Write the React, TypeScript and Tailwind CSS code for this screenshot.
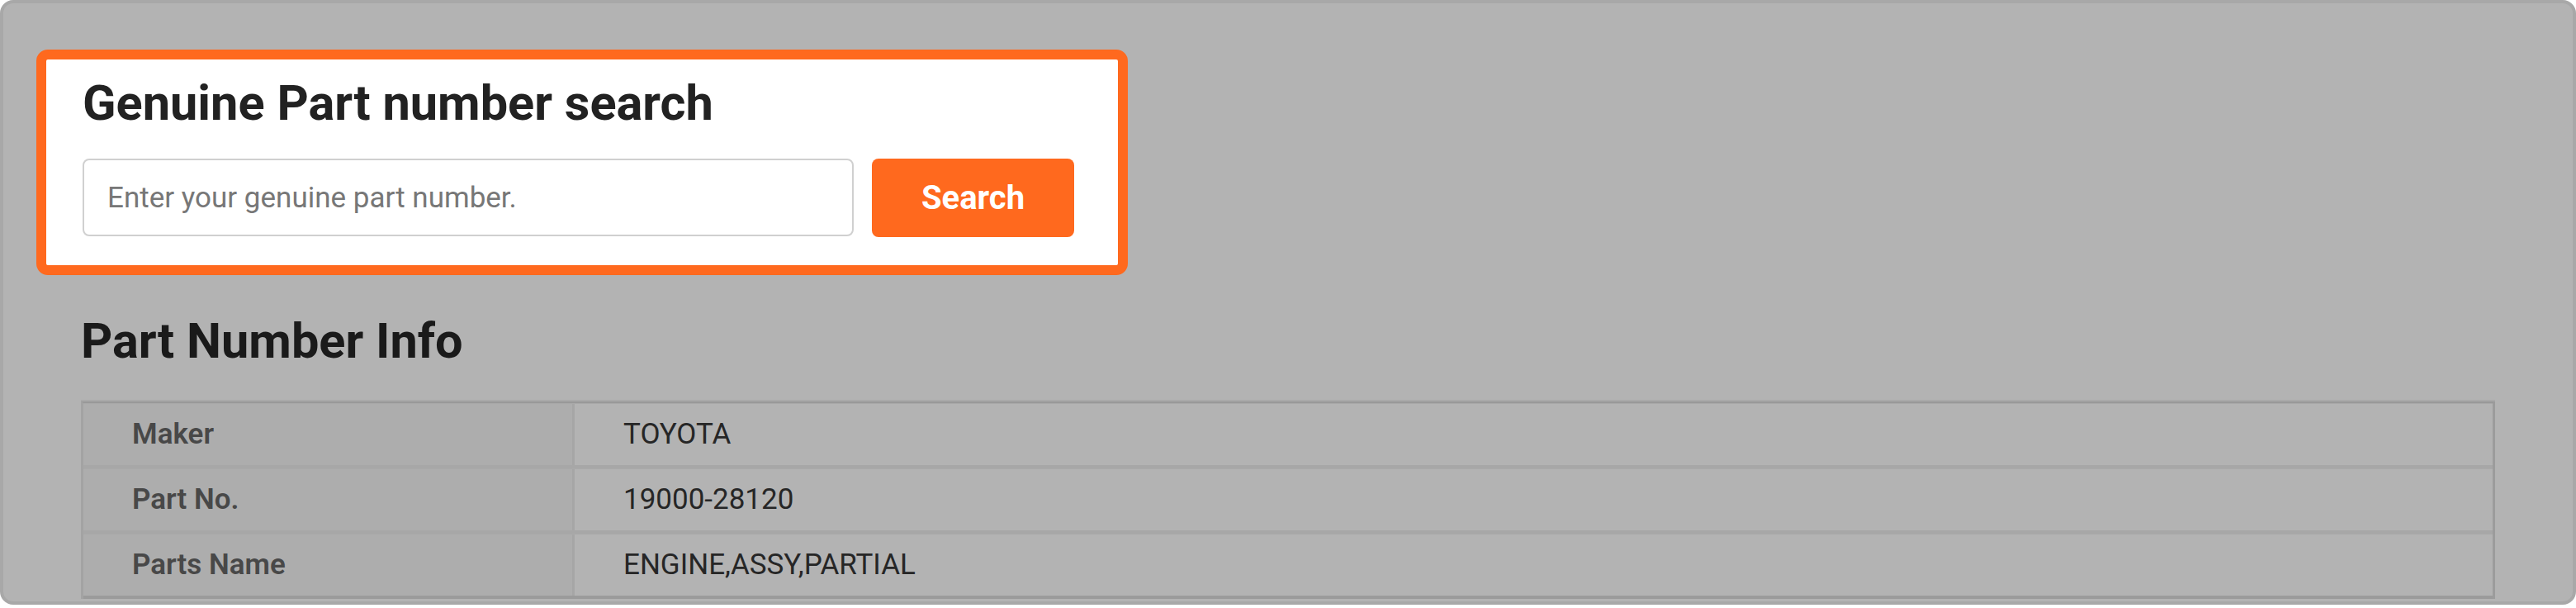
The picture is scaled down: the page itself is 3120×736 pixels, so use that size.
const rows = [
  { label: "Maker", value: "TOYOTA" },
  { label: "Part No.", value: "19000-28120" },
  { label: "Parts Name", value: "ENGINE,ASSY,PARTIAL" },
];

export default function App() {
  return (
    <div className="min-h-screen bg-white font-['Roboto','Liberation_Sans',sans-serif]">
      <div className="h-[732px] overflow-hidden rounded-[16px] border-4 border-[#a8a8a8] bg-[#b3b3b3] px-[40px] pt-[56px]">
        {/* highlighted search block */}
        <section className="w-[1322px] rounded-[14px] border-[12px] border-[#ff691e] bg-white px-[44px] pt-[23px] pb-[34px]">
          <h2 className="text-[59.5px] font-bold leading-[60px] text-[#222222]">
            Genuine Part number search
          </h2>
          <div className="mt-[37px] flex gap-[22px]">
            <input
              type="text"
              placeholder="Enter your genuine part number."
              className="h-[94px] w-[934px] rounded-[8px] border-2 border-[#d0d0d0] bg-white px-[28px] text-[35px] text-[#333] placeholder:text-[#777777] focus:outline-none"
            />
            <button className="h-[95px] w-[245px] rounded-[8px] bg-[#ff691e] text-[40px] font-bold text-white">
              Search
            </button>
          </div>
        </section>

        {/* part info */}
        <section className="px-[54px]">
          <h2 className="mt-[44px] text-[59.5px] font-bold leading-[72px] text-[#1a1a1a]">
            Part Number Info
          </h2>
          <div className="mt-[35px] border-t-2 border-[#a9a9a9]">
            <div className="border-x-[3px] border-t-2 border-[#999999] border-r-[#9c9c9c] border-l-[#a3a3a3]">
              {rows.map((row, i) => (
                <div
                  key={row.label}
                  className={`flex h-[79px] border-t border-[#a9a9a9] border-b-4 ${
                    i === rows.length - 1 ? "border-b-[#9b9b9b]" : "border-b-[#a7a7a7]"
                  }`}
                >
                  <div className="flex w-[595px] items-center border-r-[3px] border-[#a6a6a6] bg-[#adadad] pl-[59px] text-[35px] font-semibold text-[#484848]">
                    {row.label}
                  </div>
                  <div className="flex flex-1 items-center pl-[59px] text-[35px] text-[#262626]">
                    {row.value}
                  </div>
                </div>
              ))}
            </div>
          </div>
        </section>
      </div>
    </div>
  );
}
